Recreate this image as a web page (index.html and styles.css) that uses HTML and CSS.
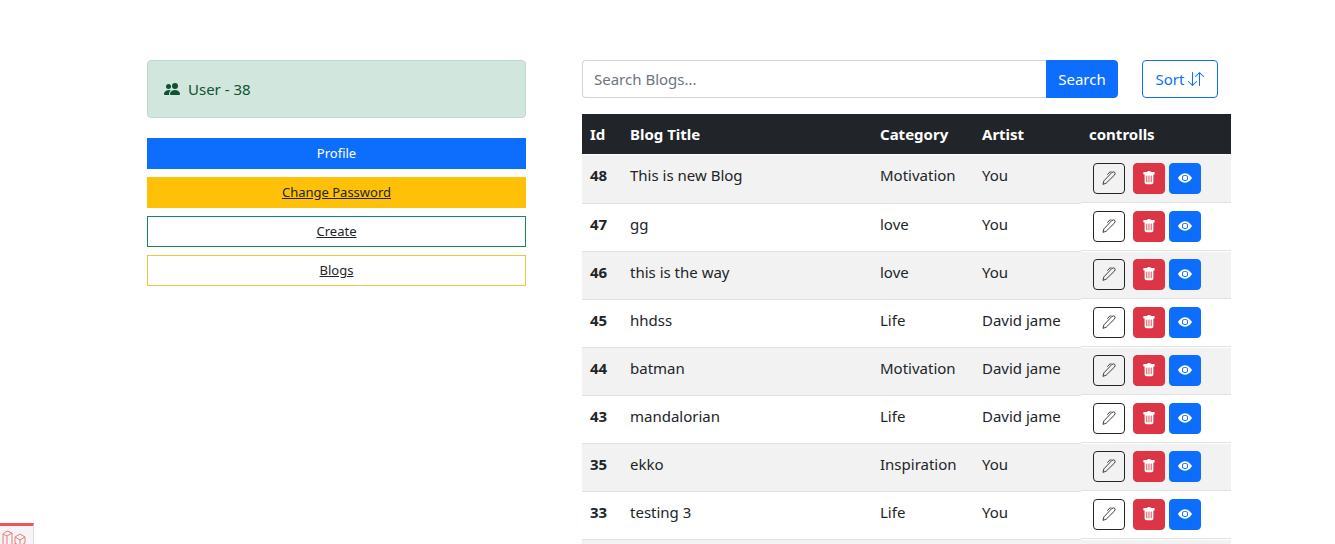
FILE: index.html
```html
<!DOCTYPE html>
<html lang="en">
<head>
<meta charset="utf-8">
<meta name="viewport" content="width=device-width, initial-scale=1">
<title>Blogs</title>
<link rel="stylesheet" href="styles.css">
</head>
<body>
<svg class="sprite" aria-hidden="true">
  <symbol id="people" viewBox="0 0 16 16"><path d="M7 14s-1 0-1-1 1-4 5-4 5 3 5 4-1 1-1 1H7zm4-6a3 3 0 1 0 0-6 3 3 0 0 0 0 6z"/><path d="M5.216 14A2.238 2.238 0 0 1 5 13c0-1.355.68-2.75 1.936-3.72A6.325 6.325 0 0 0 5 9c-4 0-5 3-5 4s1 1 1 1h4.216z"/><path d="M4.5 8a2.5 2.5 0 1 0 0-5 2.5 2.5 0 0 0 0 5z"/></symbol>
  <symbol id="arrows" viewBox="0 0 16 16"><path d="M11.5 15a.5.5 0 0 0 .5-.5V2.707l3.146 3.147a.5.5 0 0 0 .708-.708l-4-4a.5.5 0 0 0-.708 0l-4 4a.5.5 0 1 0 .708.708L11 2.707V14.5a.5.5 0 0 0 .5.5zm-7-14a.5.5 0 0 1 .5.5v11.793l3.146-3.147a.5.5 0 0 1 .708.708l-4 4a.5.5 0 0 1-.708 0l-4-4a.5.5 0 0 1 .708-.708L4 13.293V1.5a.5.5 0 0 1 .5-.5z"/></symbol>
  <symbol id="pen" viewBox="0 0 16 16"><path fill="none" stroke="currentColor" stroke-linejoin="round" stroke-linecap="round" d="M1.200 14.800 2.200 11.200 11.200 1.800Q13.300.200 14.500 1.500T14 4.900L5 13.700ZM10.500 1Q9.300.700 8.300 1.700L6.500 3.800"/></symbol>
  <symbol id="trash" viewBox="0 0 16 16"><path d="M2.5 1a1 1 0 0 0-1 1v1a1 1 0 0 0 1 1H3v9a2 2 0 0 0 2 2h6a2 2 0 0 0 2-2V4h.5a1 1 0 0 0 1-1V2a1 1 0 0 0-1-1H10a1 1 0 0 0-1-1H7a1 1 0 0 0-1 1H2.500zm3 4a.5.5 0 0 1 .5.5v7a.5.5 0 0 1-1 0v-7a.5.5 0 0 1 .5-.5zM8 5a.5.5 0 0 1 .5.5v7a.5.5 0 0 1-1 0v-7A.5.5 0 0 1 8 5zm3 .5v7a.5.5 0 0 1-1 0v-7a.5.5 0 0 1 1 0z"/></symbol>
  <symbol id="eye" viewBox="0 0 16 16"><path d="M10.5 8a2.5 2.5 0 1 1-5 0 2.500 2.500 0 0 1 5 0z"/><path d="M0 8s3-5.500 8-5.500S16 8 16 8s-3 5.500-8 5.500S0 8 0 8zm8 3.500a3.500 3.500 0 1 0 0-7 3.500 3.500 0 0 0 0 7z"/></symbol>
</svg>
<main class="page">
  <aside class="sidebar">
    <div class="alert"><svg class="icon"><use href="#people"/></svg><span>User - 38</span></div>
    <nav class="menu">
      <a class="menu-item profile" href="#">Profile</a>
      <a class="menu-item password" href="#">Change Password</a>
      <a class="menu-item create" href="#">Create</a>
      <a class="menu-item blogs" href="#">Blogs</a>
    </nav>
  </aside>
  <section class="content">
    <div class="toolbar">
      <form class="search">
        <input class="search-input" type="text" placeholder="Search Blogs..." aria-label="Search Blogs">
        <button class="search-button" type="button">Search</button>
      </form>
      <button class="sort-button" type="button">Sort <svg class="icon"><use href="#arrows"/></svg></button>
    </div>
    <table class="table">
      <colgroup><col class="col-id"><col class="col-title"><col class="col-category"><col class="col-artist"><col class="col-controls"></colgroup>
      <thead><tr><th scope="col">Id</th><th scope="col">Blog Title</th><th scope="col">Category</th><th scope="col">Artist</th><th scope="col">controlls</th></tr></thead>
      <tbody id="rows"></tbody>
    </table>
  </section>
</main>
<button class="debug" type="button" aria-label="Debug bar">
  <svg class="debug-icon" viewBox="0 0 24 24"><path d="M1 4l4-3 5 2v13l-5 4-4-3zM1 4l4 2 5-3M5 6v14M13 7l5-3 5 3v6l-5 3-5-3zM13 7l5 3 5-3M18 10v6M10 16l4-3"/></svg>
</button>
<script src="script.js"></script>
</body>
</html>
```
FILE: script.js
```js
const blogs = [
  [48, "This is new Blog", "Motivation", "You"],
  [47, "gg", "love", "You"],
  [46, "this is the way", "love", "You"],
  [45, "hhdss", "Life", "David jame"],
  [44, "batman", "Motivation", "David jame"],
  [43, "mandalorian", "Life", "David jame"],
  [35, "ekko", "Inspiration", "You"],
  [33, "testing 3", "Life", "You"],
  ["", "", "", ""]
];

const button = (kind, icon, label) =>
  `<button class="action ${kind}" type="button" aria-label="${label}"><svg class="action-icon"><use href="#${icon}"/></svg></button>`;

document.getElementById("rows").innerHTML = blogs.map(([id, title, category, artist]) => `
  <tr>
    <th scope="row">${id}</th><td>${title}</td><td>${category}</td><td>${artist}</td>
    <td class="controls"><div class="actions">${id ? button("edit", "pen", "Edit") + button("delete", "trash", "Delete") + button("view", "eye", "View") : ""}</div></td>
  </tr>`).join("");
```
FILE: styles.css
```css
* { box-sizing: border-box; }
body {
  margin: 0;
  background: #fff;
  color: #212529;
  font: 15px/24px Tahoma, "Noto Sans", sans-serif;
}
button, input { font: inherit; }
button { cursor: pointer; }
.sprite { display: none; }
.icon { width: 16px; height: 16px; fill: currentColor; }

.page {
  display: grid;
  grid-template-columns: 379fr 649fr;
  align-items: start;
  gap: 56px;
  height: 100vh;
  padding: 60px 104px 0 147px;
  overflow: hidden;
}

.alert {
  display: flex;
  align-items: center;
  gap: 8px;
  margin-bottom: 20px;
  padding: 16px;
  border: 1px solid #badbcc;
  border-radius: 4px;
  background: #d1e7dd;
  color: #0f5132;
}
.menu { display: grid; gap: 8px; }
.menu-item {
  padding: 4px 8px;
  border: 1px solid;
  color: #212529;
  font-size: 13px;
  line-height: 21px;
  text-align: center;
}
.profile { border-color: #0d6efd; background: #0d6efd; color: #fff; text-decoration: none; }
.password { border-color: #ffc107; background: #ffc107; }
.create { border-color: #198754; }
.blogs { border-color: #e8c840; }

.toolbar { display: flex; gap: 24px; margin-bottom: 16px; padding-right: 13px; }
.search { display: flex; flex: 1; min-width: 0; }
.search-input {
  flex: 1;
  min-width: 0;
  padding: 6px 11px;
  border: 1px solid #ced4da;
  border-right: 0;
  border-radius: 4px 0 0 4px;
  background: #fff;
  color: #212529;
}
.search-input::placeholder { color: #6c757d; opacity: 1; }
.search-button, .sort-button {
  height: 38px;
  padding: 0 11px;
  border: 1px solid #0d6efd;
}
.search-button { width: 72px; border-radius: 0 4px 4px 0; background: #0d6efd; color: #fff; }
.sort-button {
  display: flex;
  align-items: center;
  justify-content: center;
  gap: 4px;
  width: 76px;
  border-radius: 4px;
  background: #fff;
  color: #0d6efd;
}

.table { width: 100%; border-collapse: separate; border-spacing: 0; table-layout: fixed; }
.col-id { width: 40px; }
.col-title { width: 250px; }
.col-category { width: 102px; }
.col-artist { width: 107px; }
.table th, .table td { padding: 8px; text-align: left; vertical-align: top; }
.table thead th { background: #212529; color: #fff; border-bottom: 1px solid #fff; background-clip: padding-box; white-space: nowrap; }
.table tbody th, .table tbody td { height: 48px; border-bottom: 1px solid #dee2e6; }
.table tbody tr:first-child > * { height: 49px; }
.table tbody tr:nth-child(odd) > :not(.controls),
.table tbody tr:nth-child(odd) .actions { background: #f2f2f2; }
.table tbody .controls { padding: 0; border: 0; }
.actions {
  display: flex;
  height: 47px;
  padding: 7px 12px;
  border-bottom: 1px solid #dee2e6;
}
.table tbody tr:first-child .actions { height: 48px; padding-top: 8px; }
.action {
  display: grid;
  place-items: center;
  width: 32px;
  height: 31px;
  padding: 0 0 1px;
  border: 1px solid;
  border-radius: 4px;
}
.action-icon { width: 14px; height: 14px; fill: currentColor; }
.edit { margin-right: 8px; border-color: #212529; background: transparent; color: #212529; }
.delete { margin-right: 4px; border-color: #dc3545; background: #dc3545; color: #fff; }
.view { border-color: #0d6efd; background: #0d6efd; color: #fff; }

.debug {
  position: fixed;
  bottom: 0;
  left: 0;
  width: 34px;
  height: 21px;
  padding: 4px 2px 0;
  overflow: hidden;
  border: 0;
  border-top: 3px solid #e8585b;
  border-right: 1px solid #ddd;
  background: #f5f5f5;
}
.debug-icon { display: block; width: 24px; height: 24px; fill: none; stroke: #ee7b78; }
```
